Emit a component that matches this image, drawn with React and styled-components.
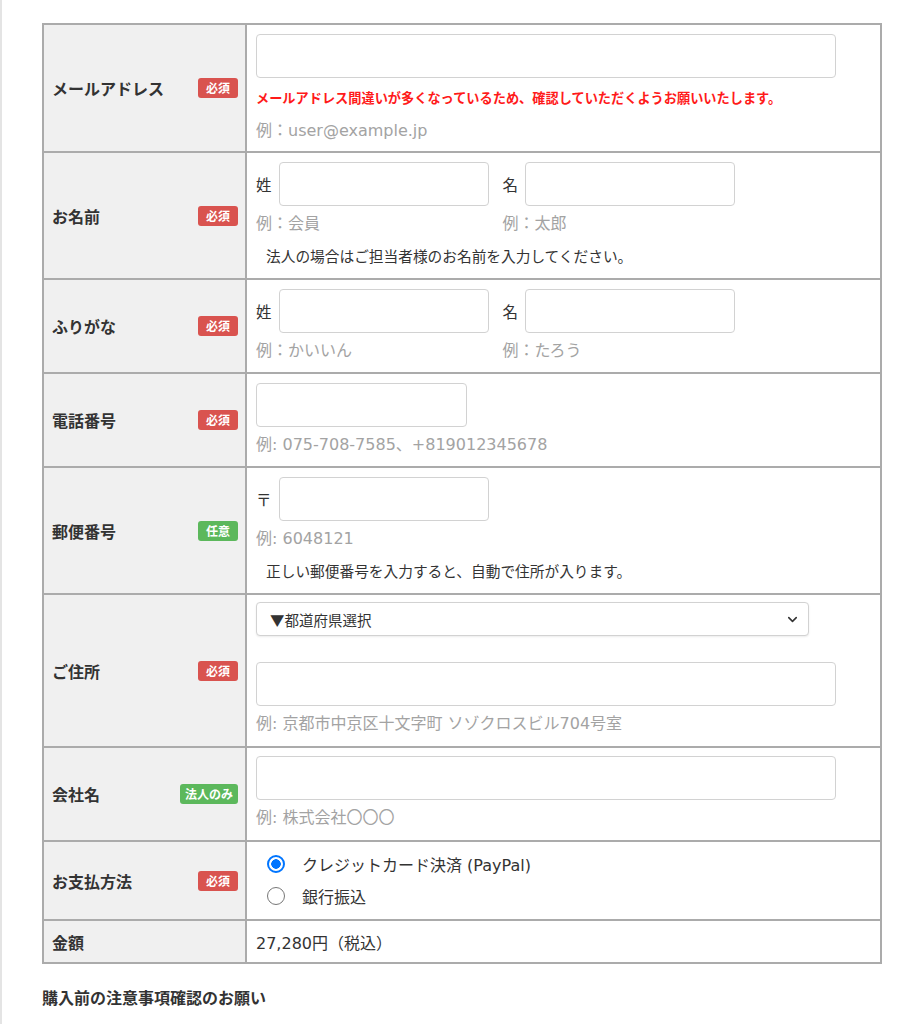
import React from "react";
import styled, { createGlobalStyle } from "styled-components";
import { ChevronDown } from "lucide-react";

const GlobalStyle = createGlobalStyle`
  html, body {
    margin: 0;
    padding: 0;
    background: #fff;
  }
  body {
    font-family: "Noto Sans", "Noto Sans CJK JP", sans-serif;
    color: #333;
  }
  * {
    box-sizing: border-box;
  }
`;

const colors = {
  border: "#ababab",
  labelBg: "#f0f0f0",
  text: "#333",
  hint: "#a3a3a3",
  inputBorder: "#d2d2d2",
  required: "#d9534f",
  optional: "#5cb85c",
};

const latin = `"DejaVu Sans", "Noto Sans CJK JP", sans-serif`;

const Page = styled.div`
  min-height: 1024px;
  border-left: 2px solid #e4e4e4;
  padding: 23px 0 0 40px;
`;

const Table = styled.div`
  width: 840px;
  border: 2px solid ${colors.border};
  display: flex;
  flex-direction: column;
`;

const Row = styled.div`
  display: grid;
  grid-template-columns: 203px 1fr;
  & + & {
    border-top: 2px solid ${colors.border};
  }
`;

const Label = styled.div`
  background: ${colors.labelBg};
  border-right: 2px solid ${colors.border};
  display: flex;
  align-items: center;
  justify-content: space-between;
  padding: 0 7px 0 8px;
  font-size: 16px;
  font-weight: 700;
  color: ${colors.text};
`;

const Badge = styled.span`
  display: inline-flex;
  align-items: center;
  justify-content: center;
  height: 20px;
  min-width: 40px;
  padding: 0 5px;
  border-radius: 3px;
  background: ${(p) => (p.$green ? colors.optional : colors.required)};
  color: #fff;
  font-size: 12px;
  font-weight: 700;
`;

const Cell = styled.div`
  padding: ${(p) => p.$pad || "9px 9px 10px 9px"};
  display: flex;
  flex-direction: column;
  justify-content: center;
  font-size: 15px;
`;

const TextInput = styled.input`
  display: block;
  width: ${(p) => p.$w || 580}px;
  height: 44px;
  border: 1.5px solid ${colors.inputBorder};
  border-radius: 4px;
  background: #fff;
  font-size: 15px;
  padding: 0 10px;
  outline: none;
`;

const Warning = styled.div`
  margin-top: 10px;
  line-height: 20px;
  font-size: 13.2px;
  font-weight: 700;
  color: #ff1a1a;
`;

const Hint = styled.div`
  margin-top: ${(p) => p.$mt ?? 7}px;
  line-height: 22px;
  font-family: ${latin};
  font-size: 16px;
  color: ${colors.hint};
`;

const Note = styled.div`
  margin-top: 10px;
  padding-left: 10px;
  line-height: 22px;
  font-size: 14.7px;
  color: ${colors.text};
`;

const Pair = styled.div`
  display: flex;
  gap: 14px;
`;

const Field = styled.div`
  display: flex;
  flex-direction: column;
`;

const Prefixed = styled.div`
  display: flex;
  align-items: center;
  gap: 7px;
  font-size: 15.5px;
  color: ${colors.text};
`;

const SelectWrap = styled.div`
  position: relative;
  width: 553px;
  margin-top: -2px;
  margin-bottom: 26px;
`;

const Select = styled.select`
  appearance: none;
  width: 100%;
  height: 34px;
  border: 1.5px solid ${colors.inputBorder};
  border-radius: 4px;
  background: #fff;
  box-shadow: 0 1px 2px rgba(0, 0, 0, 0.08);
  padding: 0 30px 0 13px;
  font-family: "Noto Sans CJK JP", sans-serif;
  font-size: 14.5px;
  color: ${colors.text};
`;

const Chevron = styled(ChevronDown)`
  position: absolute;
  right: 9px;
  top: 10px;
  pointer-events: none;
  color: #333;
`;

const RadioRow = styled.label`
  display: flex;
  align-items: center;
  height: 32px;
  padding-left: 11px;
  gap: 17px;
  font-family: ${latin};
  font-size: 16px;
  color: ${colors.text};
`;

const Radio = styled.input`
  appearance: none;
  width: 18px;
  height: 18px;
  margin: 0;
  border-radius: 50%;
  border: 1.5px solid #777;
  background: #fff;
  &:checked {
    border: 2px solid #0075ff;
    background: radial-gradient(circle, #0075ff 0 4.5px, #fff 5px);
  }
`;

const Amount = styled.div`
  font-family: ${latin};
  font-size: 16px;
  color: ${colors.text};
`;

const Heading = styled.h3`
  margin: 21px 0 0;
  font-size: 16px;
  font-weight: 700;
  color: ${colors.text};
`;

const Required = () => <Badge>必須</Badge>;

const App = () => {
  return (
    <Page>
      <GlobalStyle />
      <Table>
        <Row>
          <Label>
            メールアドレス
            <Required />
          </Label>
          <Cell $pad="9px">
            <TextInput type="email" />
            <Warning>
              メールアドレス間違いが多くなっているため、確認していただくようお願いいたします。
            </Warning>
            <Hint $mt={12}>例：user@example.jp</Hint>
          </Cell>
        </Row>

        <Row>
          <Label>
            お名前
            <Required />
          </Label>
          <Cell $pad="9px 9px 11px 9px">
            <Pair>
              <Field>
                <Prefixed>
                  姓<TextInput $w={210} />
                </Prefixed>
                <Hint>例：会員</Hint>
              </Field>
              <Field>
                <Prefixed>
                  名<TextInput $w={210} />
                </Prefixed>
                <Hint>例：太郎</Hint>
              </Field>
            </Pair>
            <Note>法人の場合はご担当者様のお名前を入力してください。</Note>
          </Cell>
        </Row>

        <Row>
          <Label>
            ふりがな
            <Required />
          </Label>
          <Cell>
            <Pair>
              <Field>
                <Prefixed>
                  姓<TextInput $w={210} />
                </Prefixed>
                <Hint>例：かいいん</Hint>
              </Field>
              <Field>
                <Prefixed>
                  名<TextInput $w={210} />
                </Prefixed>
                <Hint>例：たろう</Hint>
              </Field>
            </Pair>
          </Cell>
        </Row>

        <Row>
          <Label>
            電話番号
            <Required />
          </Label>
          <Cell>
            <TextInput type="tel" $w={211} />
            <Hint>例: 075-708-7585、+819012345678</Hint>
          </Cell>
        </Row>

        <Row>
          <Label>
            郵便番号
            <Badge $green>任意</Badge>
          </Label>
          <Cell $pad="9px 9px 11px 9px">
            <Prefixed>
              〒<TextInput $w={210} />
            </Prefixed>
            <Hint>例: 6048121</Hint>
            <Note>正しい郵便番号を入力すると、自動で住所が入ります。</Note>
          </Cell>
        </Row>

        <Row>
          <Label>
            ご住所
            <Required />
          </Label>
          <Cell $pad="9px 9px 11px 9px">
            <SelectWrap>
              <Select defaultValue="">
                <option value="">▼都道府県選択</option>
              </Select>
              <Chevron size={15} strokeWidth={2.5} />
            </SelectWrap>
            <TextInput />
            <Hint>例: 京都市中京区十文字町 ソゾクロスビル704号室</Hint>
          </Cell>
        </Row>

        <Row>
          <Label>
            会社名
            <Badge $green>法人のみ</Badge>
          </Label>
          <Cell $pad="8px 9px 11px 9px">
            <TextInput />
            <Hint>例: 株式会社〇〇〇</Hint>
          </Cell>
        </Row>

        <Row>
          <Label>
            お支払方法
            <Required />
          </Label>
          <Cell $pad="6px 9px 7px 9px">
            <RadioRow>
              <Radio type="radio" name="pay" defaultChecked />
              クレジットカード決済 (PayPal)
            </RadioRow>
            <RadioRow>
              <Radio type="radio" name="pay" />
              銀行振込
            </RadioRow>
          </Cell>
        </Row>

        <Row>
          <Label>金額</Label>
          <Cell $pad="9px 9px 8px 9px">
            <Amount>27,280円（税込）</Amount>
          </Cell>
        </Row>
      </Table>
      <Heading>購入前の注意事項確認のお願い</Heading>
    </Page>
  );
};

export default App;
